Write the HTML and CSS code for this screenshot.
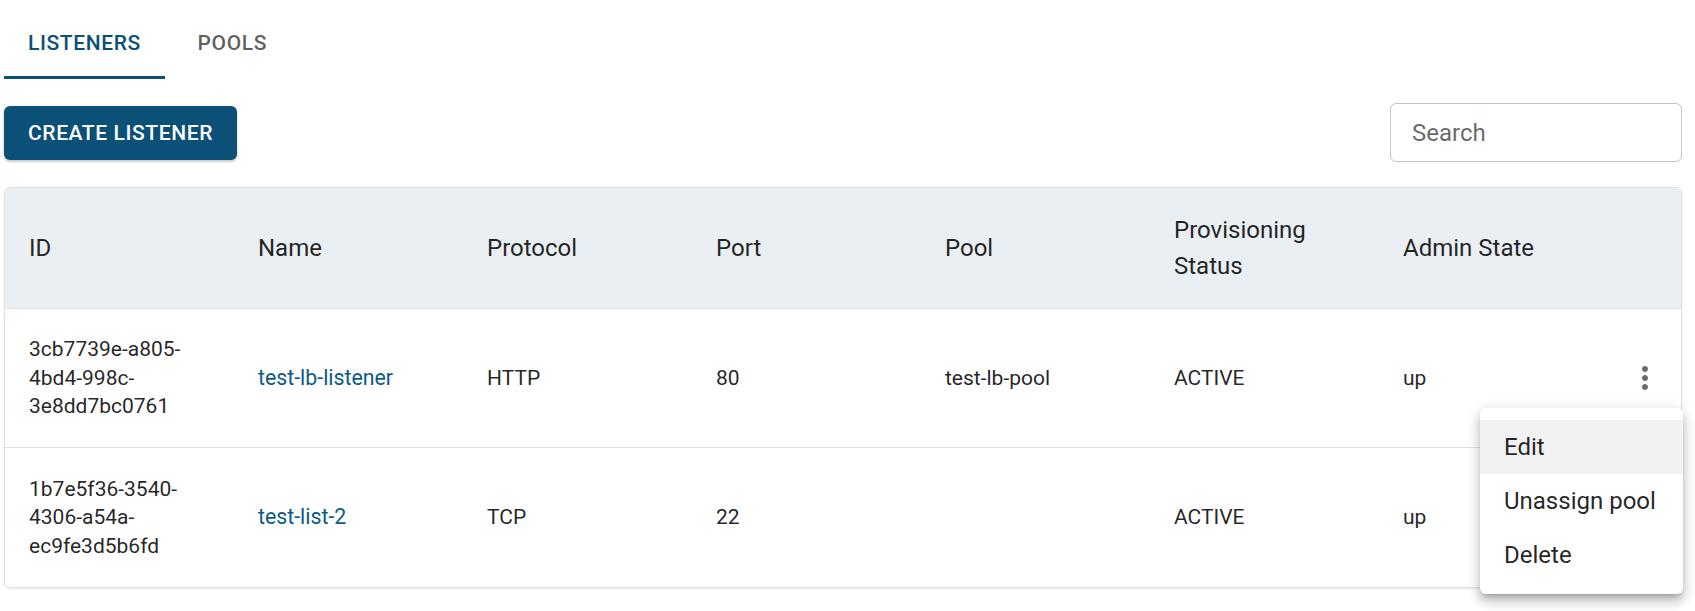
FILE: index.html
```html
<!DOCTYPE html>
<html lang="en">
<head>
<meta charset="utf-8">
<title>Listeners</title>
<link rel="stylesheet" href="styles.css">
</head>
<body>
<div class="page">
  <div class="tabs">
    <div class="tab active">LISTENERS</div>
    <div class="tab">POOLS</div>
  </div>
  <div class="toolbar">
    <button class="btn-primary">CREATE LISTENER</button>
    <div class="search"><span class="placeholder">Search</span></div>
  </div>
  <div class="card-wrap">
    <div class="card">
      <table class="grid">
        <colgroup>
          <col class="c"><col class="c"><col class="c"><col class="c"><col class="c"><col class="c"><col class="c"><col>
        </colgroup>
        <thead>
          <tr>
            <th>ID</th><th>Name</th><th>Protocol</th><th>Port</th><th>Pool</th><th>Provisioning Status</th><th>Admin State</th><th></th>
          </tr>
        </thead>
        <tbody>
          <tr>
            <td>3cb7739e-a805-4bd4-998c-3e8dd7bc0761</td>
            <td><a class="link">test-lb-listener</a></td>
            <td>HTTP</td>
            <td>80</td>
            <td>test-lb-pool</td>
            <td>ACTIVE</td>
            <td>up</td>
            <td class="act"><svg class="kebab" viewBox="0 0 24 24"><path d="M12 8c1.1 0 2-.9 2-2s-.9-2-2-2-2 .9-2 2 .9 2 2 2zm0 2c-1.1 0-2 .9-2 2s.9 2 2 2 2-.9 2-2-.9-2-2-2zm0 6c-1.1 0-2 .9-2 2s.9 2 2 2 2-.9 2-2-.9-2-2-2z"/></svg></td>
          </tr>
          <tr class="last">
            <td>1b7e5f36-3540-4306-a54a-ec9fe3d5b6fd</td>
            <td><a class="link">test-list-2</a></td>
            <td>TCP</td>
            <td>22</td>
            <td></td>
            <td>ACTIVE</td>
            <td>up</td>
            <td class="act"><svg class="kebab" viewBox="0 0 24 24"><path d="M12 8c1.1 0 2-.9 2-2s-.9-2-2-2-2 .9-2 2 .9 2 2 2zm0 2c-1.1 0-2 .9-2 2s.9 2 2 2 2-.9 2-2-.9-2-2-2zm0 6c-1.1 0-2 .9-2 2s.9 2 2 2 2-.9 2-2-.9-2-2-2z"/></svg></td>
          </tr>
        </tbody>
      </table>
    </div>
    <ul class="menu">
      <li class="item hover">Edit</li>
      <li class="item">Unassign pool</li>
      <li class="item">Delete</li>
    </ul>
  </div>
</div>
</body>
</html>
```

FILE: styles.css
```css
* { box-sizing: border-box; }
html, body { margin: 0; padding: 0; background: #fff; }
body {
  font-family: Roboto, "Liberation Sans", Arial, sans-serif;
  color: rgba(0,0,0,0.87);
  min-height: 611px;
}
.page {
  padding: 7px 13px 24px 4px;
}
.tabs {
  display: flex;
  height: 72px;
}
.tab {
  display: flex;
  align-items: center;
  justify-content: center;
  min-width: 135px;
  padding: 0 24px;
  font-size: 21px;
  font-weight: 500;
  letter-spacing: 0.6px;
  color: rgba(0,0,0,0.65);
  border-bottom: 3px solid transparent;
  padding-top: 3px;
}
.tab.active {
  color: #0b5077;
  border-bottom-color: #0b5077;
}
.toolbar {
  margin-top: 24px;
  display: flex;
  align-items: center;
  justify-content: space-between;
  height: 59px;
}
.btn-primary {
  font-family: inherit;
  height: 54px;
  padding: 0 24px;
  background: #0b5077;
  color: #fff;
  border: none;
  border-radius: 6px;
  font-size: 21px;
  font-weight: 500;
  letter-spacing: 0.6px;
  box-shadow: 0 2px 2px rgba(0,0,0,0.14), 0 1px 4px rgba(0,0,0,0.12);
}
.search {
  width: 292px;
  height: 59px;
  border: 1px solid #c4c4c4;
  border-radius: 6px;
  display: flex;
  align-items: center;
  padding-left: 21px;
  padding-top: 1px;
}
.placeholder {
  font-size: 24px;
  color: rgba(0,0,0,0.6);
}
.card-wrap {
  position: relative;
  margin-top: 25px;
}
.card {
  border: 1px solid #e0e0e0;
  border-radius: 6px;
  overflow: hidden;
  box-shadow: 0 1px 2px rgba(0,0,0,0.10);
}
.grid {
  width: 100%;
  border-collapse: collapse;
  table-layout: fixed;
}
.grid col.c { width: 229px; }
.grid th {
  background: #eaeff3;
  text-align: left;
  font-weight: 400;
  font-size: 24px;
  line-height: 36px;
  padding: 24px 24px;
  height: 120px;
  border-bottom: 1px solid #e0e0e0;
  vertical-align: middle;
}
.grid td {
  font-size: 21px;
  line-height: 28.5px;
  padding: 26px 24px;
  height: 138px;
  vertical-align: middle;
  border-bottom: 1px solid #e0e0e0;
  word-wrap: break-word;
}
.grid tr.last td {
  border-bottom: none;
  height: 140px;
}
.link {
  color: #0d5a87;
  text-decoration: none;
  font-size: 21.3px;
}
.grid td.act {
  padding: 0;
  text-align: center;
}
.kebab {
  width: 36px;
  height: 36px;
  fill: #6b6b6b;
  display: inline-block;
  vertical-align: middle;
}
.menu {
  position: absolute;
  right: -1px;
  top: 221px;
  width: 203px;
  margin: 0;
  padding: 12px 0;
  list-style: none;
  background: #fff;
  border-radius: 6px;
  z-index: 2;
  box-shadow: 0 5px 5px -3px rgba(0,0,0,0.2), 0 8px 10px 1px rgba(0,0,0,0.14), 0 3px 14px 2px rgba(0,0,0,0.12);
}
.item {
  height: 54px;
  display: flex;
  align-items: center;
  padding-left: 24px;
  font-size: 24px;
  color: rgba(0,0,0,0.87);
}
.item.hover {
  background: #f2f2f2;
}
```
